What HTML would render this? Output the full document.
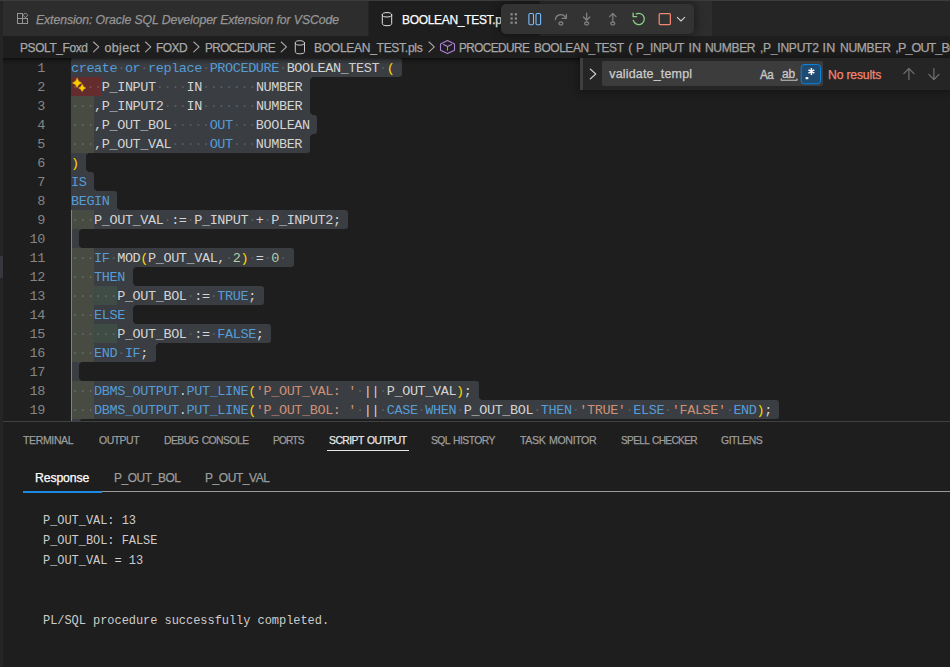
<!DOCTYPE html>
<html><head><meta charset="utf-8"><style>
*{margin:0;padding:0;box-sizing:border-box}
html,body{width:950px;height:667px;overflow:hidden;background:#1e1e1e;font-family:"Liberation Sans",sans-serif}
.abs{position:absolute}
#leftstrip{position:absolute;left:0;top:1px;width:3px;height:666px;background:#252526}
#tabbar{position:absolute;left:0;top:0;width:950px;height:36px;background:#252526;border-top:1px solid #3c3c3c}
.tab{position:absolute;top:1px;height:35px}
.bc{position:absolute;top:36px;height:22px;color:#a9a9a9;font-size:13px;line-height:22px;white-space:nowrap}
.sel{position:absolute;left:71px;height:19px;background:#3a3d41}
.tint{position:absolute;height:19px}
.code{position:absolute;left:71px;height:19px;line-height:19px;padding-top:1px;font-family:"Liberation Mono",monospace;font-size:13.5px;letter-spacing:-0.4px;white-space:pre;color:#d4d4d4}
.ws{color:rgba(227,228,226,0.2)}
.ln{position:absolute;left:0;width:45px;text-align:right;height:19px;line-height:19px;padding-top:1px;font-family:"Liberation Mono",monospace;font-size:13.5px;letter-spacing:-0.4px;color:#858585}
#editor{position:absolute;left:3px;top:58px;width:947px;height:363px;overflow:hidden}
.ptab{position:absolute;top:430px;height:20px;line-height:20px;font-size:11px;color:#9d9d9d;white-space:nowrap}
.rtab{position:absolute;top:467px;height:20px;line-height:20px;font-size:13px;color:#9d9d9d;white-space:nowrap}
.out{position:absolute;left:43px;font-family:"Liberation Mono",monospace;font-size:12px;letter-spacing:-0.05px;line-height:20px;color:#cccccc;white-space:pre}
</style></head>
<body>
<div id="tabbar"></div>
<div class="tab" style="left:3px;width:365px;background:#2d2d2d"></div>
<div class="tab" style="left:369px;width:170px;background:#1e1e1e"></div>
<div class="tab" style="left:540px;width:172px;background:#2d2d2d"></div>
<div id="leftstrip"></div>
<div class="abs" style="left:0;top:256px;width:3px;height:22px;background:#37373d"></div>

<!-- inactive tab label -->
<div style="position:absolute;left:35.60px;top:10.47px;height:20px;line-height:20px;font-family:'Liberation Sans',sans-serif;font-size:12.5px;letter-spacing:-0.108px;word-spacing:0px;color:#969696;white-space:pre;font-style:italic;-webkit-text-stroke:0.25px #969696;transform:scaleX(0.9828);transform-origin:0.00px 0;">Extension: Oracle SQL Developer Extension for VSCode</div>
<div class="abs" style="left:369px;top:1px;width:132px;height:35px;overflow:hidden">
<div class="abs" style="left:-369px;top:-1px;width:950px;height:40px">
<div style="position:absolute;left:402.00px;top:10.47px;height:20px;line-height:20px;font-family:'Liberation Sans',sans-serif;font-size:12.5px;letter-spacing:-0.326px;word-spacing:0px;color:#ffffff;white-space:pre;-webkit-text-stroke:0.25px #ffffff;transform:scaleX(0.9600);transform-origin:0.00px 0;">BOOLEAN_TEST.pls</div>
</div></div>

<!-- breadcrumbs -->
<div style="position:absolute;left:19.50px;top:38.47px;height:20px;line-height:20px;font-family:'Liberation Sans',sans-serif;font-size:12.5px;letter-spacing:-0.402px;word-spacing:0px;color:#a9a9a9;white-space:pre;-webkit-text-stroke:0.25px #a9a9a9;transform:scaleX(0.9539);transform-origin:0.00px 0;">PSOLT_Foxd</div>
<div style="position:absolute;left:104.50px;top:38.47px;height:20px;line-height:20px;font-family:'Liberation Sans',sans-serif;font-size:12.5px;letter-spacing:0.330px;word-spacing:0px;color:#a9a9a9;white-space:pre;-webkit-text-stroke:0.25px #a9a9a9;">object</div>
<div style="position:absolute;left:156.00px;top:38.47px;height:20px;line-height:20px;font-family:'Liberation Sans',sans-serif;font-size:12.5px;letter-spacing:-0.527px;word-spacing:0px;color:#a9a9a9;white-space:pre;-webkit-text-stroke:0.25px #a9a9a9;transform:scaleX(0.9564);transform-origin:0.00px 0;">FOXD</div>
<div style="position:absolute;left:204.50px;top:38.47px;height:20px;line-height:20px;font-family:'Liberation Sans',sans-serif;font-size:12.5px;letter-spacing:-0.622px;word-spacing:0px;color:#a9a9a9;white-space:pre;-webkit-text-stroke:0.25px #a9a9a9;transform:scaleX(0.9413);transform-origin:0.00px 0;">PROCEDURE</div>
<div style="position:absolute;left:314.00px;top:38.47px;height:20px;line-height:20px;font-family:'Liberation Sans',sans-serif;font-size:12.5px;letter-spacing:-0.301px;word-spacing:0px;color:#a9a9a9;white-space:pre;-webkit-text-stroke:0.25px #a9a9a9;transform:scaleX(0.9629);transform-origin:0.00px 0;">BOOLEAN_TEST.pls</div>
<div style="position:absolute;left:459.00px;top:38.47px;height:20px;line-height:20px;font-family:'Liberation Sans',sans-serif;font-size:12.5px;letter-spacing:-0.601px;word-spacing:0px;color:#a9a9a9;white-space:pre;-webkit-text-stroke:0.25px #a9a9a9;transform:scaleX(0.9432);transform-origin:0.00px 0;">PROCEDURE</div>
<div style="position:absolute;left:533.70px;top:38.47px;height:20px;line-height:20px;font-family:'Liberation Sans',sans-serif;font-size:12.5px;letter-spacing:-0.450px;word-spacing:0px;color:#a9a9a9;white-space:pre;-webkit-text-stroke:0.25px #a9a9a9;transform:scaleX(0.9525);transform-origin:0.00px 0;">BOOLEAN_TEST</div>
<div style="position:absolute;left:628.30px;top:38.47px;height:20px;line-height:20px;font-family:'Liberation Sans',sans-serif;font-size:12.5px;letter-spacing:0.000px;word-spacing:0px;color:#a9a9a9;white-space:pre;-webkit-text-stroke:0.25px #a9a9a9;">(</div>
<div style="position:absolute;left:635.80px;top:38.47px;height:20px;line-height:20px;font-family:'Liberation Sans',sans-serif;font-size:12.5px;letter-spacing:-0.381px;word-spacing:0px;color:#a9a9a9;white-space:pre;-webkit-text-stroke:0.25px #a9a9a9;transform:scaleX(0.9584);transform-origin:0.00px 0;">P_INPUT</div>
<div style="position:absolute;left:688.40px;top:38.47px;height:20px;line-height:20px;font-family:'Liberation Sans',sans-serif;font-size:12.5px;letter-spacing:0.100px;word-spacing:0px;color:#a9a9a9;white-space:pre;-webkit-text-stroke:0.25px #a9a9a9;">IN</div>
<div style="position:absolute;left:704.70px;top:38.47px;height:20px;line-height:20px;font-family:'Liberation Sans',sans-serif;font-size:12.5px;letter-spacing:-0.370px;word-spacing:0px;color:#a9a9a9;white-space:pre;-webkit-text-stroke:0.25px #a9a9a9;transform:scaleX(0.9670);transform-origin:0.00px 0;">NUMBER</div>
<div style="position:absolute;left:759.50px;top:38.47px;height:20px;line-height:20px;font-family:'Liberation Sans',sans-serif;font-size:12.5px;letter-spacing:-0.279px;word-spacing:0px;color:#a9a9a9;white-space:pre;-webkit-text-stroke:0.25px #a9a9a9;transform:scaleX(0.9659);transform-origin:0.00px 0;">,P_INPUT2</div>
<div style="position:absolute;left:822.60px;top:38.47px;height:20px;line-height:20px;font-family:'Liberation Sans',sans-serif;font-size:12.5px;letter-spacing:0.200px;word-spacing:0px;color:#a9a9a9;white-space:pre;-webkit-text-stroke:0.25px #a9a9a9;">IN</div>
<div style="position:absolute;left:840.10px;top:38.47px;height:20px;line-height:20px;font-family:'Liberation Sans',sans-serif;font-size:12.5px;letter-spacing:-0.338px;word-spacing:0px;color:#a9a9a9;white-space:pre;-webkit-text-stroke:0.25px #a9a9a9;transform:scaleX(0.9698);transform-origin:0.00px 0;">NUMBER</div>
<div style="position:absolute;left:895.30px;top:38.47px;height:20px;line-height:20px;font-family:'Liberation Sans',sans-serif;font-size:12.5px;letter-spacing:-0.850px;word-spacing:0px;color:#a9a9a9;white-space:pre;-webkit-text-stroke:0.25px #a9a9a9;">,P_OUT_BOL</div>

<!-- editor -->
<div class="abs" style="left:0;top:58px;width:950px;height:363px;overflow:hidden">
<div class="abs" style="left:0;top:-58px;width:950px;height:667px">
<div class="sel" style="top:58px;width:331.1px;border-radius:3px 3px 3px 0px"></div>
<div class="sel" style="top:77px;width:238.7px;border-radius:0px 0px 0px 0px"></div>
<div style="position:absolute;left:309.7px;top:77px;width:3px;height:3px;background:radial-gradient(circle 3px at 100% 100%, #1e1e1e 2.5px, #3a3d41 3px)"></div>
<div class="sel" style="top:96px;width:238.7px;border-radius:0px 0px 0px 0px"></div>
<div style="position:absolute;left:309.7px;top:112px;width:3px;height:3px;background:radial-gradient(circle 3px at 100% 0%, #1e1e1e 2.5px, #3a3d41 3px)"></div>
<div class="sel" style="top:115px;width:246.4px;border-radius:0px 3px 3px 0px"></div>
<div class="sel" style="top:134px;width:238.7px;border-radius:0px 0px 3px 0px"></div>
<div style="position:absolute;left:309.7px;top:134px;width:3px;height:3px;background:radial-gradient(circle 3px at 100% 100%, #1e1e1e 2.5px, #3a3d41 3px)"></div>
<div class="sel" style="top:153px;width:15.4px;border-radius:0px 0px 0px 0px"></div>
<div style="position:absolute;left:86.4px;top:153px;width:3px;height:3px;background:radial-gradient(circle 3px at 100% 100%, #1e1e1e 2.5px, #3a3d41 3px)"></div>
<div style="position:absolute;left:86.4px;top:169px;width:3px;height:3px;background:radial-gradient(circle 3px at 100% 0%, #1e1e1e 2.5px, #3a3d41 3px)"></div>
<div class="sel" style="top:172px;width:23.1px;border-radius:0px 3px 0px 0px"></div>
<div style="position:absolute;left:94.1px;top:188px;width:3px;height:3px;background:radial-gradient(circle 3px at 100% 0%, #1e1e1e 2.5px, #3a3d41 3px)"></div>
<div class="sel" style="top:191px;width:46.2px;border-radius:0px 3px 0px 0px"></div>
<div style="position:absolute;left:117.2px;top:207px;width:3px;height:3px;background:radial-gradient(circle 3px at 100% 0%, #1e1e1e 2.5px, #3a3d41 3px)"></div>
<div class="sel" style="top:210px;width:277.2px;border-radius:0px 3px 3px 0px"></div>
<div class="sel" style="top:229px;width:7.7px;border-radius:0px 0px 0px 0px"></div>
<div style="position:absolute;left:78.7px;top:229px;width:3px;height:3px;background:radial-gradient(circle 3px at 100% 100%, #1e1e1e 2.5px, #3a3d41 3px)"></div>
<div style="position:absolute;left:78.7px;top:245px;width:3px;height:3px;background:radial-gradient(circle 3px at 100% 0%, #1e1e1e 2.5px, #3a3d41 3px)"></div>
<div class="sel" style="top:248px;width:223.3px;border-radius:0px 3px 3px 0px"></div>
<div class="sel" style="top:267px;width:61.6px;border-radius:0px 0px 0px 0px"></div>
<div style="position:absolute;left:132.6px;top:267px;width:3px;height:3px;background:radial-gradient(circle 3px at 100% 100%, #1e1e1e 2.5px, #3a3d41 3px)"></div>
<div style="position:absolute;left:132.6px;top:283px;width:3px;height:3px;background:radial-gradient(circle 3px at 100% 0%, #1e1e1e 2.5px, #3a3d41 3px)"></div>
<div class="sel" style="top:286px;width:192.5px;border-radius:0px 3px 3px 0px"></div>
<div class="sel" style="top:305px;width:61.6px;border-radius:0px 0px 0px 0px"></div>
<div style="position:absolute;left:132.6px;top:305px;width:3px;height:3px;background:radial-gradient(circle 3px at 100% 100%, #1e1e1e 2.5px, #3a3d41 3px)"></div>
<div style="position:absolute;left:132.6px;top:321px;width:3px;height:3px;background:radial-gradient(circle 3px at 100% 0%, #1e1e1e 2.5px, #3a3d41 3px)"></div>
<div class="sel" style="top:324px;width:200.2px;border-radius:0px 3px 3px 0px"></div>
<div class="sel" style="top:343px;width:84.7px;border-radius:0px 0px 3px 0px"></div>
<div style="position:absolute;left:155.7px;top:343px;width:3px;height:3px;background:radial-gradient(circle 3px at 100% 100%, #1e1e1e 2.5px, #3a3d41 3px)"></div>
<div class="sel" style="top:362px;width:7.7px;border-radius:0px 0px 0px 0px"></div>
<div style="position:absolute;left:78.7px;top:362px;width:3px;height:3px;background:radial-gradient(circle 3px at 100% 100%, #1e1e1e 2.5px, #3a3d41 3px)"></div>
<div style="position:absolute;left:78.7px;top:378px;width:3px;height:3px;background:radial-gradient(circle 3px at 100% 0%, #1e1e1e 2.5px, #3a3d41 3px)"></div>
<div class="sel" style="top:381px;width:408.1px;border-radius:0px 3px 0px 0px"></div>
<div style="position:absolute;left:479.1px;top:397px;width:3px;height:3px;background:radial-gradient(circle 3px at 100% 0%, #1e1e1e 2.5px, #3a3d41 3px)"></div>
<div class="sel" style="top:400px;width:708.4px;border-radius:0px 3px 3px 0px"></div>
<div class="sel" style="top:419px;width:7.7px;border-radius:0px 0px 3px 0px"></div>
<div style="position:absolute;left:78.7px;top:419px;width:3px;height:3px;background:radial-gradient(circle 3px at 100% 100%, #1e1e1e 2.5px, #3a3d41 3px)"></div>
<div class="tint" style="top:77px;left:71.0px;width:30.8px;background:#642c2d"></div>
<div class="tint" style="top:96px;left:71.0px;width:23.1px;background:#484b41"></div>
<div class="tint" style="top:115px;left:71.0px;width:23.1px;background:#484b41"></div>
<div class="tint" style="top:134px;left:71.0px;width:23.1px;background:#484b41"></div>
<div class="tint" style="top:210px;left:71.0px;width:23.1px;background:#484b41"></div>
<div class="tint" style="top:248px;left:71.0px;width:23.1px;background:#484b41"></div>
<div class="tint" style="top:267px;left:71.0px;width:23.1px;background:#484b41"></div>
<div class="tint" style="top:286px;left:71.0px;width:23.1px;background:#484b41"></div>
<div class="tint" style="top:305px;left:71.0px;width:23.1px;background:#484b41"></div>
<div class="tint" style="top:324px;left:71.0px;width:23.1px;background:#484b41"></div>
<div class="tint" style="top:343px;left:71.0px;width:23.1px;background:#484b41"></div>
<div class="tint" style="top:381px;left:71.0px;width:23.1px;background:#484b41"></div>
<div class="tint" style="top:400px;left:71.0px;width:23.1px;background:#484b41"></div>
<div class="tint" style="top:286px;left:94.1px;width:23.1px;background:#3f4b45"></div>
<div class="tint" style="top:324px;left:94.1px;width:23.1px;background:#3f4b45"></div>
<div style="position:absolute;left:71px;top:210px;width:1px;height:211px;background:#84836f"></div>
<div class="ln" style="top:58px">1</div>
<div class="code" style="top:58px"><span style="color:#569cd6">create</span><span class="ws">·</span><span style="color:#569cd6">or</span><span class="ws">·</span><span style="color:#569cd6">replace</span><span class="ws">·</span><span style="color:#569cd6">PROCEDURE</span><span class="ws">·</span><span style="color:#d4d4d4">BOOLEAN_TEST</span><span class="ws">·</span><span style="color:#ffd700">(</span></div>
<div class="ln" style="top:77px">2</div>
<div class="code" style="top:77px"><span class="ws">·</span><span class="ws">·</span><span class="ws">·</span><span class="ws">·</span><span style="color:#d4d4d4">P_INPUT</span><span class="ws">·</span><span class="ws">·</span><span class="ws">·</span><span class="ws">·</span><span style="color:#d4d4d4">IN</span><span class="ws">·</span><span class="ws">·</span><span class="ws">·</span><span class="ws">·</span><span class="ws">·</span><span class="ws">·</span><span class="ws">·</span><span style="color:#d4d4d4">NUMBER</span></div>
<div class="ln" style="top:96px">3</div>
<div class="code" style="top:96px"><span class="ws">·</span><span class="ws">·</span><span class="ws">·</span><span style="color:#d4d4d4">,</span><span style="color:#d4d4d4">P_INPUT2</span><span class="ws">·</span><span class="ws">·</span><span class="ws">·</span><span style="color:#d4d4d4">IN</span><span class="ws">·</span><span class="ws">·</span><span class="ws">·</span><span class="ws">·</span><span class="ws">·</span><span class="ws">·</span><span class="ws">·</span><span style="color:#d4d4d4">NUMBER</span></div>
<div class="ln" style="top:115px">4</div>
<div class="code" style="top:115px"><span class="ws">·</span><span class="ws">·</span><span class="ws">·</span><span style="color:#d4d4d4">,</span><span style="color:#d4d4d4">P_OUT_BOL</span><span class="ws">·</span><span class="ws">·</span><span class="ws">·</span><span class="ws">·</span><span class="ws">·</span><span style="color:#569cd6">OUT</span><span class="ws">·</span><span class="ws">·</span><span class="ws">·</span><span style="color:#d4d4d4">BOOLEAN</span></div>
<div class="ln" style="top:134px">5</div>
<div class="code" style="top:134px"><span class="ws">·</span><span class="ws">·</span><span class="ws">·</span><span style="color:#d4d4d4">,</span><span style="color:#d4d4d4">P_OUT_VAL</span><span class="ws">·</span><span class="ws">·</span><span class="ws">·</span><span class="ws">·</span><span class="ws">·</span><span style="color:#569cd6">OUT</span><span class="ws">·</span><span class="ws">·</span><span class="ws">·</span><span style="color:#d4d4d4">NUMBER</span></div>
<div class="ln" style="top:153px">6</div>
<div class="code" style="top:153px"><span style="color:#ffd700">)</span></div>
<div class="ln" style="top:172px">7</div>
<div class="code" style="top:172px"><span style="color:#569cd6">IS</span></div>
<div class="ln" style="top:191px">8</div>
<div class="code" style="top:191px"><span style="color:#569cd6">BEGIN</span></div>
<div class="ln" style="top:210px">9</div>
<div class="code" style="top:210px"><span class="ws">·</span><span class="ws">·</span><span class="ws">·</span><span style="color:#d4d4d4">P_OUT_VAL</span><span class="ws">·</span><span style="color:#d4d4d4">:</span><span style="color:#d4d4d4">=</span><span class="ws">·</span><span style="color:#d4d4d4">P_INPUT</span><span class="ws">·</span><span style="color:#d4d4d4">+</span><span class="ws">·</span><span style="color:#d4d4d4">P_INPUT2</span><span style="color:#d4d4d4">;</span></div>
<div class="ln" style="top:229px">10</div>
<div class="code" style="top:229px"></div>
<div class="ln" style="top:248px">11</div>
<div class="code" style="top:248px"><span class="ws">·</span><span class="ws">·</span><span class="ws">·</span><span style="color:#569cd6">IF</span><span class="ws">·</span><span style="color:#d4d4d4">MOD</span><span style="color:#ffd700">(</span><span style="color:#d4d4d4">P_OUT_VAL</span><span style="color:#d4d4d4">,</span><span class="ws">·</span><span style="color:#b5cea8">2</span><span style="color:#ffd700">)</span><span class="ws">·</span><span style="color:#d4d4d4">=</span><span class="ws">·</span><span style="color:#b5cea8">0</span><span class="ws">·</span></div>
<div class="ln" style="top:267px">12</div>
<div class="code" style="top:267px"><span class="ws">·</span><span class="ws">·</span><span class="ws">·</span><span style="color:#569cd6">THEN</span></div>
<div class="ln" style="top:286px">13</div>
<div class="code" style="top:286px"><span class="ws">·</span><span class="ws">·</span><span class="ws">·</span><span class="ws">·</span><span class="ws">·</span><span class="ws">·</span><span style="color:#d4d4d4">P_OUT_BOL</span><span class="ws">·</span><span style="color:#d4d4d4">:</span><span style="color:#d4d4d4">=</span><span class="ws">·</span><span style="color:#569cd6">TRUE</span><span style="color:#d4d4d4">;</span></div>
<div class="ln" style="top:305px">14</div>
<div class="code" style="top:305px"><span class="ws">·</span><span class="ws">·</span><span class="ws">·</span><span style="color:#569cd6">ELSE</span></div>
<div class="ln" style="top:324px">15</div>
<div class="code" style="top:324px"><span class="ws">·</span><span class="ws">·</span><span class="ws">·</span><span class="ws">·</span><span class="ws">·</span><span class="ws">·</span><span style="color:#d4d4d4">P_OUT_BOL</span><span class="ws">·</span><span style="color:#d4d4d4">:</span><span style="color:#d4d4d4">=</span><span class="ws">·</span><span style="color:#569cd6">FALSE</span><span style="color:#d4d4d4">;</span></div>
<div class="ln" style="top:343px">16</div>
<div class="code" style="top:343px"><span class="ws">·</span><span class="ws">·</span><span class="ws">·</span><span style="color:#569cd6">END</span><span class="ws">·</span><span style="color:#569cd6">IF</span><span style="color:#d4d4d4">;</span></div>
<div class="ln" style="top:362px">17</div>
<div class="code" style="top:362px"></div>
<div class="ln" style="top:381px">18</div>
<div class="code" style="top:381px"><span class="ws">·</span><span class="ws">·</span><span class="ws">·</span><span style="color:#569cd6">DBMS_OUTPUT</span><span style="color:#d4d4d4">.</span><span style="color:#569cd6">PUT_LINE</span><span style="color:#ffd700">(</span><span style="color:#ce9178">&#x27;P_OUT_VAL: &#x27;</span><span class="ws">·</span><span style="color:#d4d4d4">|</span><span style="color:#d4d4d4">|</span><span class="ws">·</span><span style="color:#d4d4d4">P_OUT_VAL</span><span style="color:#ffd700">)</span><span style="color:#d4d4d4">;</span></div>
<div class="ln" style="top:400px">19</div>
<div class="code" style="top:400px"><span class="ws">·</span><span class="ws">·</span><span class="ws">·</span><span style="color:#569cd6">DBMS_OUTPUT</span><span style="color:#d4d4d4">.</span><span style="color:#569cd6">PUT_LINE</span><span style="color:#ffd700">(</span><span style="color:#ce9178">&#x27;P_OUT_BOL: &#x27;</span><span class="ws">·</span><span style="color:#d4d4d4">|</span><span style="color:#d4d4d4">|</span><span class="ws">·</span><span style="color:#569cd6">CASE</span><span class="ws">·</span><span style="color:#569cd6">WHEN</span><span class="ws">·</span><span style="color:#d4d4d4">P_OUT_BOL</span><span class="ws">·</span><span style="color:#569cd6">THEN</span><span class="ws">·</span><span style="color:#ce9178">&#x27;TRUE&#x27;</span><span class="ws">·</span><span style="color:#569cd6">ELSE</span><span class="ws">·</span><span style="color:#ce9178">&#x27;FALSE&#x27;</span><span class="ws">·</span><span style="color:#569cd6">END</span><span style="color:#ffd700">)</span><span style="color:#d4d4d4">;</span></div>
<div class="ln" style="top:419px">20</div>
<div class="code" style="top:419px"></div>
</div>
</div>

<div class="abs" style="left:3px;top:58px;width:947px;height:6px;box-shadow:inset 0 6px 6px -6px #000"></div>
<!-- panel -->
<div class="abs" style="left:3px;top:421px;width:947px;height:1px;background:#414141"></div>
<div style="position:absolute;left:23.40px;top:430.19px;height:20px;line-height:20px;font-family:'Liberation Sans',sans-serif;font-size:11px;letter-spacing:-0.375px;word-spacing:0px;color:#9d9d9d;white-space:pre;-webkit-text-stroke:0.25px #9d9d9d;transform:scaleX(0.9549);transform-origin:0.00px 0;">TERMINAL</div>
<div style="position:absolute;left:98.50px;top:430.19px;height:20px;line-height:20px;font-family:'Liberation Sans',sans-serif;font-size:11px;letter-spacing:-0.498px;word-spacing:0px;color:#9d9d9d;white-space:pre;-webkit-text-stroke:0.25px #9d9d9d;transform:scaleX(0.9478);transform-origin:0.00px 0;">OUTPUT</div>
<div style="position:absolute;left:163.90px;top:430.19px;height:20px;line-height:20px;font-family:'Liberation Sans',sans-serif;font-size:11px;letter-spacing:-0.580px;word-spacing:1.2px;color:#9d9d9d;white-space:pre;-webkit-text-stroke:0.25px #9d9d9d;transform:scaleX(0.9434);transform-origin:0.00px 0;">DEBUG CONSOLE</div>
<div style="position:absolute;left:273.30px;top:430.19px;height:20px;line-height:20px;font-family:'Liberation Sans',sans-serif;font-size:11px;letter-spacing:-0.859px;word-spacing:0px;color:#9d9d9d;white-space:pre;-webkit-text-stroke:0.25px #9d9d9d;transform:scaleX(0.9165);transform-origin:0.00px 0;">PORTS</div>
<div style="position:absolute;left:329.00px;top:430.19px;height:20px;line-height:20px;font-family:'Liberation Sans',sans-serif;font-size:11px;letter-spacing:-0.561px;word-spacing:1.2px;color:#e7e7e7;white-space:pre;-webkit-text-stroke:0.25px #e7e7e7;transform:scaleX(0.9411);transform-origin:0.00px 0;">SCRIPT OUTPUT</div>
<div class="abs" style="left:327px;top:450px;width:82px;height:1px;background:#e7e7e7"></div>
<div style="position:absolute;left:431.40px;top:430.19px;height:20px;line-height:20px;font-family:'Liberation Sans',sans-serif;font-size:11px;letter-spacing:-0.585px;word-spacing:1.2px;color:#9d9d9d;white-space:pre;-webkit-text-stroke:0.25px #9d9d9d;transform:scaleX(0.9402);transform-origin:0.00px 0;">SQL HISTORY</div>
<div style="position:absolute;left:520.40px;top:430.19px;height:20px;line-height:20px;font-family:'Liberation Sans',sans-serif;font-size:11px;letter-spacing:-0.397px;word-spacing:1.2px;color:#9d9d9d;white-space:pre;-webkit-text-stroke:0.25px #9d9d9d;transform:scaleX(0.9631);transform-origin:0.00px 0;">TASK MONITOR</div>
<div style="position:absolute;left:620.80px;top:430.19px;height:20px;line-height:20px;font-family:'Liberation Sans',sans-serif;font-size:11px;letter-spacing:-0.736px;word-spacing:1.2px;color:#9d9d9d;white-space:pre;-webkit-text-stroke:0.25px #9d9d9d;transform:scaleX(0.9223);transform-origin:0.00px 0;">SPELL CHECKER</div>
<div style="position:absolute;left:721.20px;top:430.19px;height:20px;line-height:20px;font-family:'Liberation Sans',sans-serif;font-size:11px;letter-spacing:-0.465px;word-spacing:0px;color:#9d9d9d;white-space:pre;-webkit-text-stroke:0.25px #9d9d9d;transform:scaleX(0.9440);transform-origin:0.00px 0;">GITLENS</div>

<div style="position:absolute;left:35.00px;top:467.87px;height:20px;line-height:20px;font-family:'Liberation Sans',sans-serif;font-size:12.5px;letter-spacing:-0.145px;word-spacing:0px;color:#ffffff;white-space:pre;-webkit-text-stroke:0.25px #ffffff;transform:scaleX(0.9823);transform-origin:0.00px 0;">Response</div>
<div style="position:absolute;left:113.70px;top:467.87px;height:20px;line-height:20px;font-family:'Liberation Sans',sans-serif;font-size:12.5px;letter-spacing:-0.441px;word-spacing:0px;color:#9d9d9d;white-space:pre;-webkit-text-stroke:0.25px #9d9d9d;transform:scaleX(0.9543);transform-origin:0.00px 0;">P_OUT_BOL</div>
<div style="position:absolute;left:205.00px;top:467.87px;height:20px;line-height:20px;font-family:'Liberation Sans',sans-serif;font-size:12.5px;letter-spacing:-0.414px;word-spacing:0px;color:#9d9d9d;white-space:pre;-webkit-text-stroke:0.25px #9d9d9d;transform:scaleX(0.9557);transform-origin:0.00px 0;">P_OUT_VAL</div>
<div class="abs" style="left:23px;top:491px;width:927px;height:1px;background:#9a9a9a"></div>
<div class="abs" style="left:23px;top:491px;width:79px;height:2px;background:#1a8ae4"></div>

<div class="out" style="top:511px">P_OUT_VAL: 13
P_OUT_BOL: FALSE
P_OUT_VAL = 13


PL/SQL procedure successfully completed.</div>

<!-- find widget -->
<div class="abs" style="left:580px;top:58px;width:370px;height:32px;background:#252526;box-shadow:0 0 8px 2px rgba(0,0,0,0.36)"></div>
<div class="abs" style="left:580px;top:58px;width:3px;height:32px;background:#3f3f3f"></div>
<div class="abs" style="left:602px;top:61px;width:221px;height:25px;background:#3c3c3c;border-radius:2px"></div>
<div style="position:absolute;left:609.30px;top:64.17px;height:20px;line-height:20px;font-family:'Liberation Sans',sans-serif;font-size:12.5px;letter-spacing:0.169px;word-spacing:0px;color:#cccccc;white-space:pre;-webkit-text-stroke:0.25px #cccccc;">validate_templ</div>
<div style="position:absolute;left:828.30px;top:64.67px;height:20px;line-height:20px;font-family:'Liberation Sans',sans-serif;font-size:12.5px;letter-spacing:-0.169px;word-spacing:0px;color:#f48771;white-space:pre;-webkit-text-stroke:0.25px #f48771;transform:scaleX(0.9737);transform-origin:0.00px 0;">No results</div>

<!-- debug toolbar -->
<div class="abs" style="left:501px;top:4px;width:193px;height:30px;background:#333333;border-radius:5px;box-shadow:0 0 8px 2px rgba(0,0,0,0.36)"></div>

<div style="position:absolute;left:759.60px;top:64.64px;height:20px;line-height:20px;font-family:'Liberation Sans',sans-serif;font-size:12px;letter-spacing:-0.458px;word-spacing:0px;color:#c5c5c5;white-space:pre;transform:scaleX(0.9698);transform-origin:0.00px 0;-webkit-text-stroke:0.35px #c5c5c5;">Aa</div>
<div style="position:absolute;left:782.30px;top:63.84px;height:20px;line-height:20px;font-family:'Liberation Sans',sans-serif;font-size:12px;letter-spacing:-0.072px;word-spacing:0px;color:#c5c5c5;white-space:pre;transform:scaleX(0.9946);transform-origin:0.00px 0;-webkit-text-stroke:0.35px #c5c5c5;">ab</div>

<svg class="abs" style="left:0;top:0" width="950" height="667" viewBox="0 0 950 667" fill="none" stroke-linecap="round" stroke-linejoin="round">
<!-- ext icon in tab -->
<g stroke="#969696" stroke-width="1" stroke-linecap="butt" stroke-linejoin="miter">
<rect x="17.5" y="18.5" width="5" height="5"/><rect x="22.5" y="18.5" width="5" height="5"/><rect x="17.5" y="13.5" width="5" height="5"/>
<path d="M25.4 12.9 L27.8 15.3 L25.4 17.7 L23 15.3 Z"/>
</g>
<!-- db icon in tab -->
<g stroke="#e0e0e0" stroke-width="1">
<ellipse cx="387" cy="14.8" rx="4.7" ry="2.2"/>
<path d="M382.3 14.8 V23.5 A4.7 2.2 0 0 0 391.7 23.5 V14.8"/>
</g>
<!-- breadcrumb chevrons -->
<g stroke="#a9a9a9" stroke-width="1.1">
<path d="M93.5 42 L98.8 46.9 L93.5 51.8"/>
<path d="M145.5 42 L150.8 46.9 L145.5 51.8"/>
<path d="M193.8 42 L199.1 46.9 L193.8 51.8"/>
<path d="M281.2 42 L286.5 46.9 L281.2 51.8"/>
<path d="M429 42 L434.3 46.9 L429 51.8"/>
</g>
<!-- breadcrumb db -->
<g stroke="#c8c8c8" stroke-width="1">
<ellipse cx="299.9" cy="42.9" rx="4.6" ry="2.2"/>
<path d="M295.3 42.9 V51.6 A4.6 2.2 0 0 0 304.5 51.6 V42.9"/>
</g>
<!-- cube -->
<g stroke="#b180d7" stroke-width="1.1">
<path d="M447.5 40.5 L454.5 44 V50.3 L447.5 53.6 L440.5 50.3 V44 Z"/>
<path d="M443.5 44.5 L447.5 46.6 L451.5 44.5 M447.5 46.6 V50.3"/>
</g>
<!-- sparkle -->
<path d="M77.10 78.40 Q78.09 81.91 81.60 82.90 Q78.09 83.89 77.10 87.40 Q76.11 83.89 72.60 82.90 Q76.11 81.91 77.10 78.40 Z M82.20 84.60 Q82.95 87.25 85.60 88.00 Q82.95 88.75 82.20 91.40 Q81.45 88.75 78.80 88.00 Q81.45 87.25 82.20 84.60 Z" fill="#ffcc00" stroke="#ffcc00" stroke-width="0.6"/>
<!-- find widget -->
<g stroke="#cccccc" stroke-width="1.1">
<path d="M590.2 69 L595.8 74 L590.2 79"/>
</g>
<g stroke="#6f6f6f" stroke-width="1.2">
<path d="M908.9 68.5 V79.5 M903.8 73.6 L908.9 68.5 L914 73.6"/>
<path d="M933.9 68.5 V79.5 M928.8 74.4 L933.9 79.5 L939 74.4"/>
</g>
<rect x="801.2" y="64.5" width="19.3" height="19.3" rx="3" fill="#1f4b70" stroke="#0a84e0" stroke-width="1"/>
<g stroke="#ffffff" stroke-width="1.5" stroke-linecap="butt">
<path d="M811.4 68.1 V74.9 M808.45 69.8 L814.35 73.2 M808.45 73.2 L814.35 69.8"/>
</g>
<rect x="805.6" y="77.1" width="2.7" height="2.1" fill="#ffffff"/>
<path d="M781.2 78.8 V80.3 H797 V78.8" stroke="#c5c5c5" stroke-width="1.1"/>
<!-- debug toolbar -->
<g fill="#8c8c8c">
<rect x="510.5" y="13.2" width="2.2" height="2.2"/><rect x="514.8" y="13.2" width="2.2" height="2.2"/>
<rect x="510.5" y="17.4" width="2.2" height="2.2"/><rect x="514.8" y="17.4" width="2.2" height="2.2"/>
<rect x="510.5" y="21.6" width="2.2" height="2.2"/><rect x="514.8" y="21.6" width="2.2" height="2.2"/>
</g>
<g stroke="#75beff" stroke-width="1.1">
<rect x="528.9" y="13.5" width="4.6" height="11.2" rx="1.2"/>
<rect x="536" y="13.5" width="4.6" height="11.2" rx="1.2"/>
</g>
<g stroke="#7f7f7f" stroke-width="1.3">
<path d="M555.4 19.6 A5.4 5.4 0 0 1 565.6 17.6"/>
<path d="M566.4 14.4 V18.4 H562.2"/>
<ellipse cx="560.9" cy="23.5" rx="2" ry="1.5"/>
<path d="M586.6 13.2 V20 M583.4 17 L586.6 20.2 L589.8 17"/>
<ellipse cx="586.6" cy="23.5" rx="2" ry="1.5"/>
<path d="M612.8 21.2 V13.4 M609.6 16.6 L612.8 13.4 L616 16.6"/>
<ellipse cx="612.8" cy="23.5" rx="2" ry="1.5"/>
</g>
<g stroke="#89d185" stroke-width="1.3">
<path d="M636.3 13.9 A5.6 5.6 0 1 1 633.3 20.45"/>
<path d="M633.1 13.2 V16.7 H636.6"/>
</g>
<rect x="659.2" y="13.7" width="11.2" height="10.9" rx="1" stroke="#f48771" stroke-width="1.25"/>
<path d="M677.3 17.3 L681 21 L684.7 17.3" stroke="#cccccc" stroke-width="1.1"/>
</svg>
</body></html>
